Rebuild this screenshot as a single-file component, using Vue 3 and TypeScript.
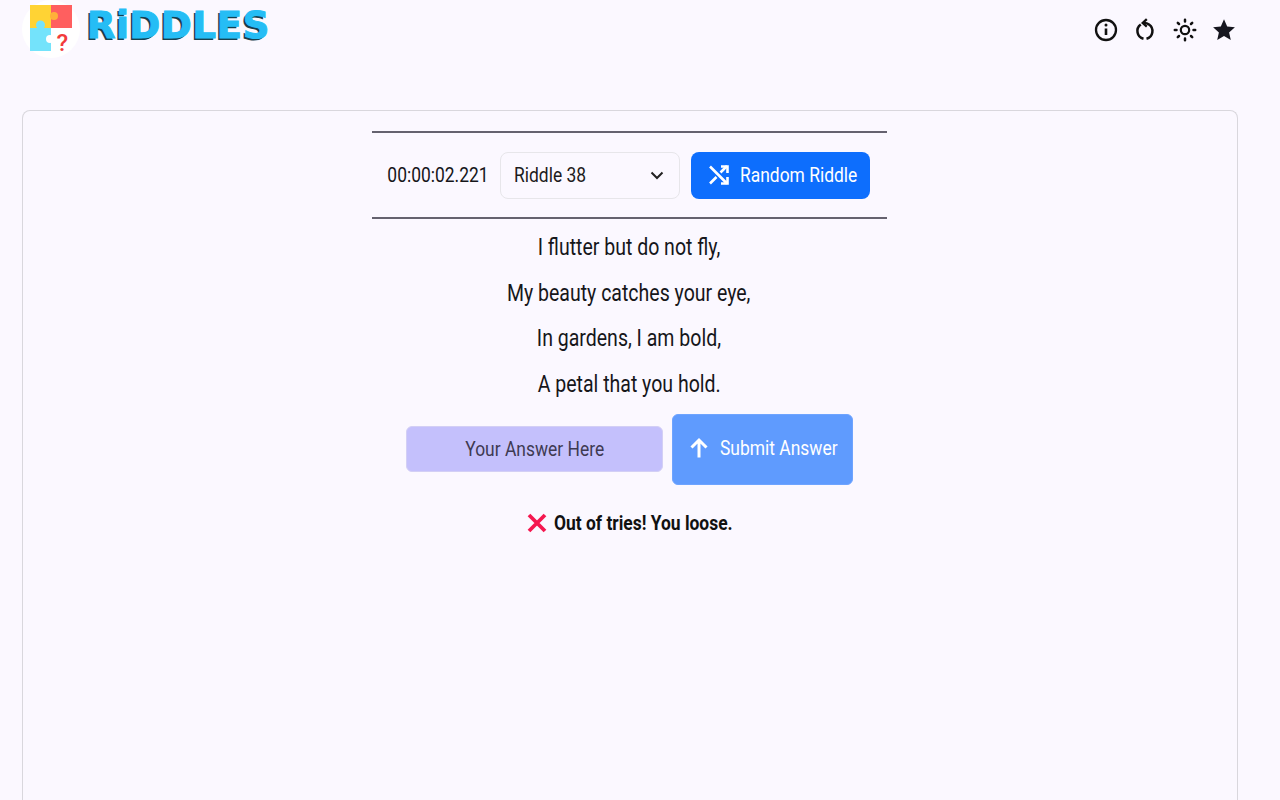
<script setup lang="ts">
const lines: string[] = [
  'I flutter but do not fly,',
  'My beauty catches your eye,',
  'In gardens, I am bold,',
  'A petal that you hold.',
]
</script>

<template>
  <div class="page">
    <header class="top">
      <div class="brand">
        <svg class="logo" width="60" height="62" viewBox="0 0 60 62">
          <circle cx="29" cy="29" r="29" fill="#ffffff" />
          <rect x="8" y="5" width="21" height="23" fill="#ffd334" />
          <rect x="29" y="5" width="21" height="23" fill="#ff5f5f" />
          <circle cx="32" cy="16" r="4" fill="#ffb03a" />
          <rect x="8" y="28" width="21" height="23" fill="#74e3fb" />
          <circle cx="18.500" cy="25" r="4.500" fill="#74e3fb" />
          <circle cx="28" cy="39" r="4" fill="#ffffff" />
          <text x="34.500" y="51" class="q">?</text>
        </svg>
        <span class="word">RiDDLES</span>
      </div>
      <div class="icons">
        <svg width="24" height="24" viewBox="0 0 24 24" fill="none" stroke="#111" stroke-width="2.300"><circle cx="12" cy="12" r="10" /><path d="M12 10.500v6.500" stroke-width="2.600" /><circle cx="12" cy="7" r="1.500" fill="#111" stroke="none" /></svg>
        <svg width="24" height="24" viewBox="0 0 24 24" fill="none" stroke="#111" stroke-width="2.500"><path d="M7.800 6.500a8 8 0 0 0 2.700 14.300" /><path d="M13.500 20.800a8 8 0 0 0 2.500-14.300 8 8 0 0 0-5-1.400" /><path d="M13.800 1.200 9.700 5l4.100 3.600" stroke-width="2.300" /></svg>
        <svg width="24" height="24" viewBox="0 0 24 24" fill="none" stroke="#111" stroke-width="2.500" stroke-linecap="round"><circle cx="12" cy="12" r="4.200" stroke-width="2.200" /><path d="M12 1.800v1.700M12 20.500v1.700M1.800 12h1.700M20.500 12h1.700M4.800 4.800 6 6M18 18l1.200 1.200M4.800 19.200 6 18M18 6l1.200-1.200" /></svg>
        <svg width="24" height="24" viewBox="0 0 24 24" fill="#16161f"><path d="M12 1.300l3.200 7.100 7.700.8-5.800 5.200 1.700 7.600L12 18.100l-6.800 3.900 1.700-7.600-5.800-5.200 7.700-.8z" /></svg>
      </div>
    </header>

    <main class="card">
      <section class="column">
        <div class="toolbar">
          <span class="timer"><span class="squeeze">00:00:02.221</span></span>
          <div class="select">
            <span class="squeeze left">Riddle 38</span>
            <svg class="fixed" width="16" height="16" viewBox="0 0 16 16" fill="none" stroke="#222" stroke-width="2"><path d="M2.500 5.500 8 11l5.500-5.500" /></svg>
          </div>
          <button class="random" type="button">
            <svg class="fixed" width="22" height="22" viewBox="0 0 22 22" fill="none" stroke="#fff" stroke-width="2.600"><path d="M2 2.500 19 19.500M2 19.500l6.500-6.500M12.500 8.500l6.500-6.500" /><path d="M13 2.500h6.500V9M13 19.500h6.500V13" /></svg>
            <span class="squeeze left">Random Riddle</span>
          </button>
        </div>

        <div class="verse">
          <p v-for="line in lines" :key="line"><span class="squeeze">{{ line }}</span></p>
        </div>

        <div class="answer">
          <div class="input"><span class="squeeze">Your Answer Here</span></div>
          <button class="submit" type="button">
            <svg class="fixed" width="20" height="22" viewBox="0 0 20 22" fill="none" stroke="#fff" stroke-width="3"><path d="M10 20.500V3M2.500 10.500 10 3l7.500 7.500" /></svg>
            <span class="squeeze left">Submit Answer</span>
          </button>
        </div>

        <div class="result">
          <svg class="fixed" width="20" height="20" viewBox="0 0 20 20" fill="none" stroke="#f5174f" stroke-width="3.800"><path d="M2 2l16 16M18 2 2 18" /></svg>
          <strong class="status"><span class="squeeze left">Out of tries! You loose.</span></strong>
        </div>
      </section>
    </main>
  </div>
</template>

<style>
html, body { margin: 0; background: #fbf8ff; overflow: hidden; }
</style>

<style scoped>
.page {
  height: 800px;
  overflow: hidden;
  background: #fbf8ff;
  color: #16161a;
  font-family: Roboto, "Liberation Sans", sans-serif;
  font-size: 21px;
}
.fixed { flex: 0 0 auto; display: block; }
.squeeze {
  display: inline-block;
  white-space: nowrap;
  transform: scaleX(0.83);
  transform-origin: center;
}
.squeeze.left { transform-origin: left center; }
.top {
  height: 110px;
  box-sizing: border-box;
  padding: 0 44px 0 22px;
  display: flex;
  justify-content: space-between;
  align-items: flex-start;
}
.brand { display: flex; align-items: flex-start; gap: 5px; }
.logo { display: block; }
.q { font: 500 24px Roboto, sans-serif; fill: #f23b3b; }
.word {
  margin-top: 3px;
  font: 700 37px/46px "DejaVu Sans", sans-serif;
  letter-spacing: 0.7px;
  color: #25bdf5;
  -webkit-text-stroke: 1px #25bdf5;
  text-shadow: -2px 2px 0 #16404e;
}
.icons { display: flex; gap: 15.500px; margin-top: 18px; }
.card {
  width: 1216px;
  height: 720px;
  margin-left: 22px;
  box-sizing: border-box;
  border: 1.500px solid #d9d7dd;
  border-bottom: 0;
  border-radius: 8px 8px 0 0;
  padding: 20px 2px 0 0;
  display: flex;
  justify-content: center;
}
.column { width: 515px; display: flex; flex-direction: column; align-items: center; }
.toolbar {
  width: 100%;
  height: 88px;
  box-sizing: border-box;
  border-top: 2px solid #65626f;
  border-bottom: 2px solid #65626f;
  display: flex;
  align-items: center;
  justify-content: center;
  gap: 11px;
}
.timer { width: 100px; flex: 0 0 auto; display: flex; justify-content: center; margin-right: 1px; }
.select {
  width: 180px;
  height: 47px;
  flex: 0 0 auto;
  box-sizing: border-box;
  border: 1.500px solid #e7e6ea;
  border-radius: 8px;
  padding: 0 14px 0 13px;
  display: flex;
  align-items: center;
  justify-content: space-between;
  color: #1d1b20;
}
.random, .submit {
  border: 0;
  font: inherit;
  color: #fff;
  display: flex;
  align-items: center;
  flex: 0 0 auto;
  overflow: hidden;
  cursor: pointer;
}
.random {
  width: 179px;
  height: 47px;
  border-radius: 8px;
  background: #0d6efd;
  gap: 10px;
  padding: 0 0 0 17px;
}
.verse { margin-top: 6px; text-align: center; font-size: 23.500px; }
.verse p { margin: 0; height: 45.500px; line-height: 45.500px; }
.answer { display: flex; align-items: center; gap: 9px; margin-top: 7px; padding-left: 1px; }
.input {
  width: 257px;
  height: 46px;
  box-sizing: border-box;
  margin-top: -2px;
  border: 1.500px solid #d3cff5;
  border-radius: 6px;
  background: #c4c0fc;
  color: #3e3a52;
  display: flex;
  align-items: center;
  justify-content: center;
}
.submit {
  width: 181px;
  height: 71px;
  box-sizing: border-box;
  border: 1.500px solid #6ea4ff;
  border-radius: 6px;
  background: #5f9bfe;
  gap: 11px;
  padding: 0 0 3px 16px;
}
.result {
  width: 204px;
  margin-top: 26px;
  display: flex;
  align-items: center;
  gap: 7px;
  color: #111;
}
.status { font-weight: 700; flex: 0 0 auto; }
</style>
